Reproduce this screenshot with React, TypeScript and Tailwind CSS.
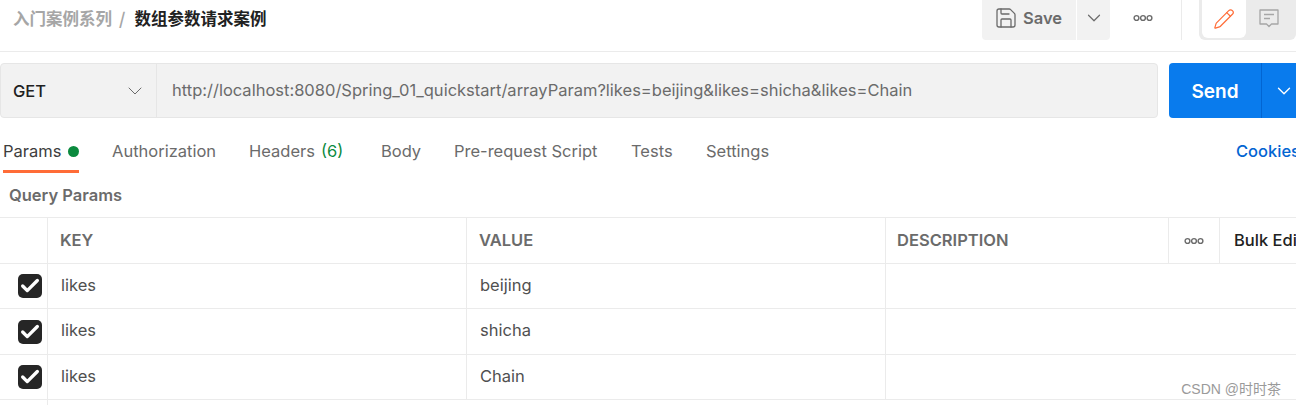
import { Check, ChevronDown, Save, Pencil } from 'lucide-react'

const tabs = [
  { label: 'Authorization', width: 'w-[137px]' },
  { label: 'Headers', width: 'w-[132px]', count: '(6)' },
  { label: 'Body', width: 'w-[73px]' },
  { label: 'Pre-request Script', width: 'w-[177px]' },
  { label: 'Tests', width: 'w-[75px]' },
  { label: 'Settings', width: 'w-[90px]' },
]

const rows = [
  { key: 'likes', value: 'beijing', height: 'h-[45px]', textPad: 'pb-[1px]' },
  { key: 'likes', value: 'shicha', height: 'h-[46px]', textPad: 'pb-[2px]' },
  { key: 'likes', value: 'Chain', height: 'h-[45px]', textPad: 'pb-[1px]' },
]

function Dots() {
  return (
    <svg width="20" height="8" viewBox="0 0 20 8" fill="none" stroke="#6b6b6b" strokeWidth="1.4">
      <circle cx="3.5" cy="4" r="2.4" />
      <circle cx="10" cy="4" r="2.4" />
      <circle cx="16.5" cy="4" r="2.4" />
    </svg>
  )
}

function CommentIcon() {
  return (
    <svg width="20" height="19" viewBox="0 0 20 19" fill="none" stroke="#a6a6a6" strokeWidth="1.3">
      <path d="M1 1h18v14h-6.5L10 17.5 7.5 15H1z" strokeLinejoin="round" />
      <path d="M5 5.5h10M5 9.5h6" />
    </svg>
  )
}

export default function App() {
  return (
    <div className="relative h-[405px] w-[1296px] overflow-hidden bg-white font-['Inter','Noto_Sans_CJK_SC',sans-serif] text-[16.5px] text-[#212121]">
      {/* Top bar */}
      <div className="flex h-[52px] items-start border-b border-[#ebebeb]">
        <div className="flex h-[37px] items-center pl-[13px] font-['Noto_Sans_CJK_SC',sans-serif] font-semibold">
          <span className="text-[#a6a6a6]">入门案例系列</span>
          <span className="ml-[7px] mr-[9px] text-[#a6a6a6]">/</span>
          <span className="text-[#212121]">数组参数请求案例</span>
        </div>
        <div className="ml-auto flex h-[40px] items-center">
          <div className="flex h-full w-[94px] items-center rounded-bl-[4px] bg-[#f2f2f2] pb-[4px] pl-[12px] text-[#6b6b6b]">
            <Save size={24} strokeWidth={1.3} />
            <span className="ml-[5px] font-semibold">Save</span>
          </div>
          <div className="ml-[1px] flex h-full w-[33px] items-center justify-center rounded-br-[4px] bg-[#f2f2f2] pb-[4px] text-[#6b6b6b]">
            <ChevronDown size={22} strokeWidth={1.3} />
          </div>
          <div className="flex h-full w-[71px] items-center pb-[4px] pl-[23px]">
            <Dots />
          </div>
          <div className="h-full w-px bg-[#ebebeb]" />
          <div className="ml-[17px] flex h-full w-[97px] rounded-b-[6px] bg-[#ebebeb] pb-[2px] pl-[3px]">
            <div className="flex w-[44px] items-center justify-center rounded-b-[6px] bg-white text-[#ff6c37]">
              <Pencil size={22} strokeWidth={1.3} />
            </div>
            <div className="flex w-[46px] items-center justify-center pb-[2px]">
              <CommentIcon />
            </div>
          </div>
        </div>
      </div>

      {/* Request bar */}
      <div className="mt-[11px] flex h-[55px]">
        <div className="flex w-[1158px] rounded-[4px] border border-[#e6e6e6] bg-[#f2f2f2]">
          <div className="flex w-[156px] items-center justify-between border-r border-[#e6e6e6] pl-[12px] pr-[9px]">
            <span className="pt-[2px] font-medium">GET</span>
            <ChevronDown size={24} strokeWidth={1} className="text-[#6b6b6b]" />
          </div>
          <div className="flex items-center pb-[1px] pl-[15px] text-[#6b6b6b]">
            http://localhost:8080/Spring_01_quickstart/arrayParam?likes=beijing&amp;likes=shicha&amp;likes=Chain
          </div>
        </div>
        <div className="ml-[11px] flex w-[127px] rounded-l-[4px] bg-[#097bed] text-white">
          <div className="flex w-[93px] items-center justify-center border-r border-[#0265d2] pt-[3px] text-[19px] font-semibold">Send</div>
          <div className="flex flex-1 items-center pl-[11px] pt-[1px]">
            <ChevronDown size={22} strokeWidth={1.5} />
          </div>
        </div>
      </div>

      {/* Tabs */}
      <div className="mt-[16px] flex h-[39px] items-start">
        <div className="flex h-full w-[112px] pl-[3px]">
          <div className="flex h-full w-[76px] items-start gap-[7px] border-b-[3px] border-[#ff6c37] pt-[5px] text-[#3d3d3d]">
            <span>Params</span>
            <span className="mt-[7px] size-[11px] rounded-full bg-[#0b8a3e]" />
          </div>
        </div>
        {tabs.map((tab) => (
          <div key={tab.label} className={`${tab.width} pt-[5px] text-[#6b6b6b]`}>
            {tab.label}
            {tab.count && <span className="ml-[6px] text-[#0b8a3e]">{tab.count}</span>}
          </div>
        ))}
        <div className="ml-auto w-[60px] overflow-hidden pt-[5px] font-medium whitespace-nowrap text-[#0265d2]">Cookies</div>
      </div>

      {/* Query params */}
      <div className="flex h-[44px] items-center pl-[9px] font-semibold text-[#6b6b6b]">Query Params</div>

      <div className="grid grid-cols-[48px_419px_419px_283px_51px_1fr] border-t border-[#ebebeb]">
        <div className="h-[45px] border-r border-[#ebebeb]" />
        <div className="flex h-[45px] items-center border-r border-[#ebebeb] pl-[12px] font-semibold text-[#6b6b6b]">KEY</div>
        <div className="flex h-[45px] items-center border-r border-[#ebebeb] pl-[12px] font-semibold text-[#6b6b6b]">VALUE</div>
        <div className="flex h-[45px] items-center border-r border-[#ebebeb] pl-[11px] font-semibold text-[#6b6b6b]">DESCRIPTION</div>
        <div className="flex h-[45px] items-center justify-center border-r border-[#ebebeb]">
          <Dots />
        </div>
        <div className="flex h-[45px] items-center overflow-hidden pl-[14px] font-medium whitespace-nowrap">Bulk Edit</div>
      </div>

      {rows.map((row) => (
        <div key={row.value} className={`grid ${row.height} grid-cols-[48px_419px_419px_1fr] border-t border-[#ebebeb]`}>
          <div className="flex items-center border-r border-[#ebebeb] pl-[18px]">
            <span className="flex size-[24px] items-center justify-center rounded-[5px] bg-[#262626] text-white">
              <Check size={22} strokeWidth={3.6} />
            </span>
          </div>
          <div className={`flex items-center border-r border-[#ebebeb] ${row.textPad} pl-[13px] text-[#505050]`}>{row.key}</div>
          <div className={`flex items-center border-r border-[#ebebeb] ${row.textPad} pl-[13px] text-[#505050]`}>{row.value}</div>
          <div />
        </div>
      ))}
      <div className="grid h-[6px] grid-cols-[48px_1fr] border-t border-[#ebebeb]">
        <div className="border-r border-[#ebebeb]" />
      </div>

      {/* Watermark */}
      <div className="absolute bottom-[5px] right-[15px] font-['Liberation_Sans','Noto_Sans_CJK_SC',sans-serif] text-[14px] text-[#9a9a9a]">
        CSDN @时时茶
      </div>
    </div>
  )
}
